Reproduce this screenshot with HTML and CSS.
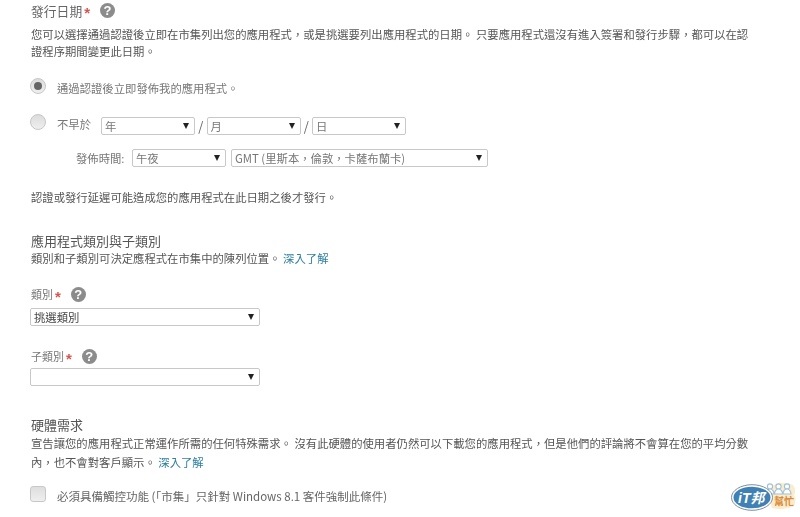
FILE: index.html
```html
<!DOCTYPE html>
<html lang="zh-Hant">
<head>
<meta charset="utf-8">
<title>發行日期</title>
<link rel="stylesheet" href="styles.css">
</head>
<body>
<main class="page">
  <div class="label-row title-first">
    <span class="title">發行日期</span><span class="req">*</span>
    <span class="help">?</span>
  </div>
  <p class="desc">您可以選擇通過認證後立即在市集列出您的應用程式，或是挑選要列出應用程式的日期。 只要應用程式還沒有進入簽署和發行步驟，都可以在認證程序期間變更此日期。</p>

  <div class="radio-row first-radio">
    <span class="radio checked"></span>
    <span class="radio-text">通過認證後立即發佈我的應用程式。</span>
  </div>
  <div class="radio-row second-radio">
    <span class="radio"></span>
    <span class="radio-text short">不早於</span>
    <div class="date-group">
      <span class="sel w94"><select><option>年</option></select></span>
      <span class="slash">/</span>
      <span class="sel w94"><select><option>月</option></select></span>
      <span class="slash">/</span>
      <span class="sel w94"><select><option>日</option></select></span>
    </div>
  </div>
  <div class="time-row">
    <span class="time-label">發佈時間:</span>
    <span class="sel w94"><select><option>午夜</option></select></span>
    <span class="sel w257"><select><option>GMT (里斯本，倫敦，卡薩布蘭卡)</option></select></span>
  </div>
  <p class="note">認證或發行延遲可能造成您的應用程式在此日期之後才發行。</p>

  <h2 class="sec sec-cat">應用程式類別與子類別</h2>
  <p class="desc tight">類別和子類別可決定應程式在市集中的陳列位置。 <a href="#" class="link">深入了解</a></p>

  <div class="label-row cat-label">
    <span class="field">類別</span><span class="req">*</span>
    <span class="help">?</span>
  </div>
  <span class="sel w230 dark"><select><option>挑選類別</option></select></span>

  <div class="label-row sub-label">
    <span class="field">子類別</span><span class="req">*</span>
    <span class="help">?</span>
  </div>
  <span class="sel w230"><select><option></option></select></span>

  <h2 class="sec sec-hw">硬體需求</h2>
  <p class="desc tight hw">宣告讓您的應用程式正常運作所需的任何特殊需求。 沒有此硬體的使用者仍然可以下載您的應用程式，但是他們的評論將不會算在您的平均分數內，也不會對客戶顯示。 <a href="#" class="link">深入了解</a></p>

  <div class="check-row">
    <span class="check"></span>
    <span class="check-text">必須具備觸控功能 (「市集」只針對 Windows 8.1 客件強制此條件)</span>
  </div>
</main>
<div class="logo" aria-label="iT邦幫忙">
  <svg viewBox="0 0 66 32" width="66" height="32">
    <path d="M38 15q-3-10 7-13 9-3 17 1 4 5 1 10 3 5 0 11-10 5-22 2z" fill="#fbeccb"/>
    <g fill="#fff" stroke="#9fc0dc" stroke-width="1.1">
      <circle cx="39" cy="4.5" r="2.6"/><circle cx="47.5" cy="4.5" r="2.6"/><circle cx="56" cy="4.5" r="2.6"/>
      <path d="M35 12c0-3 2-5 4-5s4 2 4 5zM43.5 12c0-3 2-5 4-5s4 2 4 5zM52 12c0-3 2-5 4-5s4 2 4 5z"/>
    </g>
    <ellipse cx="21" cy="15.5" rx="20.5" ry="12.8" fill="#fff" stroke="#7f8f9e" stroke-width="1"/>
    <ellipse cx="21" cy="15.5" rx="18.5" ry="10.8" fill="#3f80b5"/>
    <text x="7" y="21" class="logo-it">iT邦</text>
    <text x="43" y="23" class="logo-help">幫忙</text>
  </svg>
</div>
</body>
</html>
```
FILE: styles.css
```css
* { box-sizing: border-box; }
html, body { margin: 0; padding: 0; background: #fff; }
body {
  width: 800px;
  height: 517px;
  overflow: hidden;
  position: relative;
  font-family: "Noto Sans CJK TC", "Liberation Sans", sans-serif;
  color: #5c5c5c;
}
.page { padding: 0 12px 0 31px; filter: blur(0.35px); }
p, h2 { margin: 0; font-weight: 400; }

.label-row { display: flex; align-items: center; height: 20px; }
.title { font-size: 12.8px; color: #666; }
.field { font-size: 11px; color: #777; }
.req { color: #d9534f; font: 700 15px/16px "Liberation Sans", sans-serif; margin-left: 2px; height: 11px; }
.help {
  width: 15px; height: 15px; margin-left: 10px; border-radius: 50%;
  background: #8c8c8c; color: #fff; font: 700 13px/15px "Liberation Sans", sans-serif;
  text-align: center;
}
.desc { font-size: 11.35px; line-height: 17px; width: 725px; margin-top: 6px; color: #555; }
.desc.tight { margin-top: 0; }

.radio-row { display: flex; align-items: flex-start; height: 16px; }
.first-radio { margin-top: 18px; }
.second-radio { margin-top: 20px; }
.radio {
  width: 16px; height: 16px; margin-left: -1px; border-radius: 50%; flex: none;
  background: linear-gradient(#dcdcdc, #efefef);
  border: 1px solid #c6c6c6; display: flex; align-items: center; justify-content: center;
}
.checked::after { content: ""; width: 8px; height: 8px; border-radius: 50%; background: #666; }
.radio-text { font-size: 11.35px; line-height: 16px; margin: 2px 0 0 11px; color: #777; }
.short { width: 44px; }
.date-group { display: flex; align-items: center; margin-top: 2px; }
.slash { width: 11.5px; text-align: center; font-size: 13px; color: #666; }

.sel { position: relative; display: inline-block; height: 18px; flex: none; vertical-align: top; }
.sel select {
  appearance: none; -webkit-appearance: none; display: block; width: 100%; height: 100%;
  border: 1px solid #c8c8c8; border-radius: 2px; background: #fff; padding: 0 18px 0 3px;
  font: 11.35px/16px "Noto Sans CJK TC", "Liberation Sans", sans-serif; color: #777;
}
.sel::after {
  content: ""; position: absolute; right: 6px; top: 6px;
  border-left: 3px solid transparent; border-right: 3px solid transparent;
  border-top: 6px solid #222;
}
.dark select { color: #444; }
.w94 { width: 94px; }
.w230 { width: 230px; display: block; margin-left: -1px; }
.w257 { width: 257px; }

.time-row { display: flex; align-items: center; margin-top: 19px; padding-left: 45px; }
.time-label { width: 56px; font-size: 11.35px; color: #777; }
.time-row .sel + .sel { margin-left: 5px; }
.note { font-size: 11.35px; line-height: 17px; margin-top: 22px; color: #555; }

.sec { font-size: 13px; line-height: 18px; color: #555; }
.sec-cat { margin-top: 26px; }
.cat-label { margin-top: 17px; height: 20px; margin-bottom: 4px; }
.sub-label { margin-top: 20px; height: 20px; margin-bottom: 2px; }
.sec-hw { margin-top: 30px; }
.desc.hw { line-height: 19px; }

.check-row { display: flex; align-items: flex-start; margin-top: 14px; }
.check {
  width: 16px; height: 16px; margin-left: -1px; flex: none; border: 1px solid #c8c8c8; border-radius: 3px;
  background: linear-gradient(#dedede, #efefef);
}
.check-text { font-size: 11.5px; line-height: 16px; margin: 2px 0 0 11px; color: #666; }
.link { color: #2f7f9f; text-decoration: none; }

.logo { position: absolute; left: 731px; top: 482px; width: 66px; height: 32px; }
.logo-it { font: italic 700 14px "Liberation Sans", "Noto Sans CJK TC", sans-serif; fill: #fff; }
.logo-help { font: 700 10px "Noto Sans CJK TC", sans-serif; fill: #d98a3a; }
```
